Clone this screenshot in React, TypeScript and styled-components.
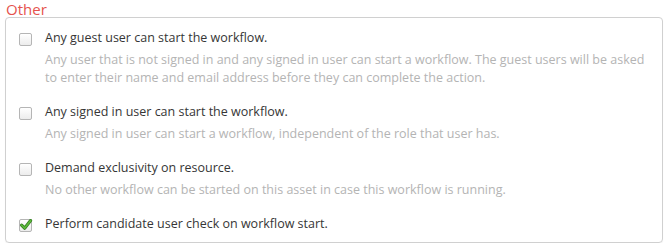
import React from 'react';
import styled, {createGlobalStyle} from "styled-components";

const GlobalStyle = createGlobalStyle`
  body {
    margin: 0;
    background: #fff;
    font-family: "Open Sans", "DejaVu Sans", sans-serif;
  }
`

type OptionType = {
    label: string
    description?: string[]
    checked?: boolean
}

const options: OptionType[] = [
    {
        label: 'Any guest user can start the workflow.',
        description: [
            'Any user that is not signed in and any signed in user can start a workflow. The guest users will be asked',
            'to enter their name and email address before they can complete the action.',
        ],
    },
    {
        label: 'Any signed in user can start the workflow.',
        description: ['Any signed in user can start a workflow, independent of the role that user has.'],
    },
    {
        label: 'Demand exclusivity on resource.',
        description: ['No other workflow can be started on this asset in case this workflow is running.'],
    },
    {
        label: 'Perform candidate user check on workflow start.',
        checked: true,
    },
]

const CheckBox = (props: { checked?: boolean }) => {
    return (
        <StyledCheckBox>
            {props.checked && (
                <svg width="14" height="14" viewBox="0 0 14 14">
                    <path d="M2.6 7.2 L5.6 10.2 L11.6 2.6" fill="none" stroke="#2f7a1c" strokeWidth="3.2"
                          strokeLinecap="round" strokeLinejoin="round"/>
                    <path d="M2.6 7.2 L5.6 10.2 L11.6 2.6" fill="none" stroke="#5cb83a" strokeWidth="1.8"
                          strokeLinecap="round" strokeLinejoin="round"/>
                </svg>
            )}
        </StyledCheckBox>
    )
}

export default function App() {
    return (
        <Page>
            <GlobalStyle/>
            <Heading>Other</Heading>
            <Panel>
                {options.map(o => (
                    <Option key={o.label}>
                        <CheckBox checked={o.checked}/>
                        <Texts>
                            <Label>{o.label}</Label>
                            {o.description && (
                                <Description>
                                    {o.description.map(line => <div key={line}>{line}</div>)}
                                </Description>
                            )}
                        </Texts>
                    </Option>
                ))}
            </Panel>
        </Page>
    );
}

const Page = styled.div`
  width: 658px;
  padding: 0 0 0 5px;
`

const Heading = styled.div`
  color: #e5534d;
  font-size: 15px;
  line-height: 17px;
  padding-left: 1px;
  margin-top: 1px;
  margin-bottom: -1px;
`

const Panel = styled.div`
  border: 1px solid #d0d0d0;
  border-radius: 4px;
  padding: 11px 13px 5px 13px;
  display: flex;
  flex-direction: column;
  gap: 16px;
  box-shadow: 0 1px 1px rgba(0, 0, 0, 0.05);
`

const Option = styled.div`
  display: flex;
  align-items: flex-start;
  gap: 13px;
`

const StyledCheckBox = styled.span`
  flex: none;
  width: 11px;
  height: 11px;
  margin-top: 4px;
  border: 1px solid #b5b5b5;
  border-radius: 2px;
  background: linear-gradient(#ffffff, #ececec);
  position: relative;

  svg {
    position: absolute;
    left: -1px;
    top: -2px;
  }
`

const Texts = styled.div`
  display: flex;
  flex-direction: column;
`

const Label = styled.div`
  color: #363636;
  font-size: 12.5px;
  line-height: 18px;
  margin-bottom: 4px;
`

const Description = styled.div`
  color: #b4b4b4;
  font-size: 12.5px;
  line-height: 18px;
`
